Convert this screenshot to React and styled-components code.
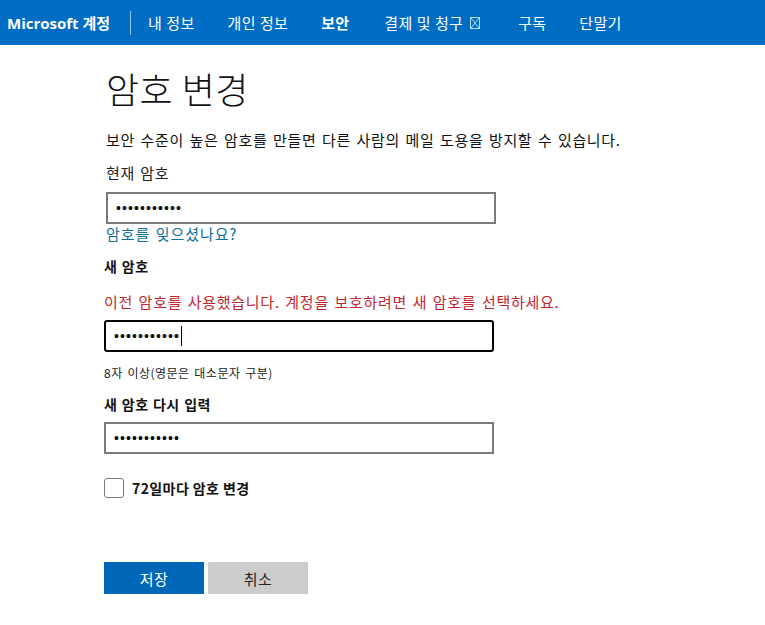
import React from "react";
import styled, { createGlobalStyle } from "styled-components";

const GlobalStyle = createGlobalStyle`
  html, body {
    margin: 0;
    padding: 0;
    background: #fff;
    font-family: "Noto Sans CJK KR", "Open Sans", sans-serif;
  }
`;

const Header = styled.header`
  display: flex;
  align-items: center;
  height: 45px;
  padding-left: 7px;
  background: #006dc4;
  color: #fff;
  overflow: hidden;
`;

const Brand = styled.div`
  font-family: "Open Sans", "Noto Sans CJK KR", sans-serif;
  font-size: 15px;
  font-weight: 700;
  white-space: nowrap;
  padding-right: 20px;
  margin-right: 17px;
  border-right: 1px solid rgba(255, 255, 255, 0.6);
  line-height: 24px;
`;

const Nav = styled.nav`
  display: flex;
  gap: 33px;
`;

const NavItem = styled.a`
  display: flex;
  align-items: center;
  gap: 7px;
  margin-right: ${(p) => (p.$active ? "2px" : "0")};
  font-size: 15px;
  font-weight: ${(p) => (p.$active ? 700 : 400)};
  letter-spacing: 0.3px;
  word-spacing: 0.5px;
  white-space: nowrap;
`;

const Main = styled.main`
  display: flex;
  flex-direction: column;
  align-items: flex-start;
  padding-left: 104px;
  width: 600px;
`;

const Title = styled.h1`
  margin: 18px 0 0 2px;
  font-size: 36px;
  font-weight: 300;
  line-height: 50px;
  color: #111;
  letter-spacing: 0.5px;
`;

const Intro = styled.p`
  margin: 16px 0 0 2px;
  font-size: 15px;
  font-weight: 400;
  letter-spacing: 0.68px;
  word-spacing: 1.5px;
  line-height: 22px;
  color: #111;
  white-space: nowrap;
`;

const PlainLabel = styled.label`
  display: block;
  margin: 11px 0 0 2px;
  font-size: 15px;
  font-weight: 400;
  letter-spacing: 0.6px;
  word-spacing: 1.5px;
  line-height: 22px;
  color: #222;
`;

const BoldLabel = styled.label`
  display: block;
  margin-top: ${(p) => p.$top}px;
  font-size: 14px;
  font-weight: 700;
  letter-spacing: 0.4px;
  word-spacing: 1px;
  line-height: 20px;
  color: #111;
`;

const FieldWrap = styled.div`
  position: relative;
  margin-top: ${(p) => p.$top}px;
  margin-left: ${(p) => p.$left || 0}px;
`;

const PasswordInput = styled.input`
  display: block;
  box-sizing: border-box;
  width: 390px;
  height: 32px;
  padding: 0 8px;
  border: 2px solid ${(p) => (p.$focused ? "#000" : "#7a7a7a")};
  border-radius: ${(p) => (p.$focused ? "3px" : "0")};
  outline: none;
  background: #fff;
  font-family: "Liberation Sans", sans-serif;
  font-size: 14px;
  letter-spacing: 1.1px;
  color: #000;
`;

const Caret = styled.span`
  position: absolute;
  left: 77px;
  top: 6px;
  width: 1px;
  height: 20px;
  background: #000;
`;

const ForgotLink = styled.a`
  display: block;
  margin-left: 2px;
  font-size: 15px;
  font-weight: 400;
  letter-spacing: 0.9px;
  word-spacing: 1.5px;
  line-height: 20px;
  color: #0f6f9f;
`;

const ErrorText = styled.div`
  margin-top: 15px;
  font-size: 15px;
  font-weight: 400;
  letter-spacing: 0.72px;
  word-spacing: 1.5px;
  line-height: 22px;
  color: #c4262e;
  white-space: nowrap;
`;

const Hint = styled.div`
  margin-top: 12px;
  font-size: 12px;
  font-weight: 400;
  letter-spacing: 0.5px;
  word-spacing: 1.5px;
  line-height: 18px;
  color: #222;
`;

const CheckRow = styled.label`
  display: flex;
  align-items: center;
  gap: 8px;
  margin-top: 24px;
  font-size: 14px;
  font-weight: 700;
  letter-spacing: 0.4px;
  line-height: 20px;
  color: #111;
`;

const CheckBox = styled.span`
  box-sizing: border-box;
  width: 20px;
  height: 20px;
  border: 1px solid #7a7a7a;
  border-radius: 3px;
`;

const Buttons = styled.div`
  display: flex;
  gap: 4px;
  margin-top: 64px;
`;

const Button = styled.button`
  width: 100px;
  height: 32px;
  padding: 0;
  border: none;
  background: ${(p) => (p.$primary ? "#0067b8" : "#cccccc")};
  color: ${(p) => (p.$primary ? "#fff" : "#222")};
  font-family: inherit;
  font-size: 15px;
  font-weight: 400;
  letter-spacing: 0.5px;
`;

const MissingGlyph = styled.svg`
  margin-right: 5px;
`;

const BillingIcon = () => (
  <MissingGlyph width="10" height="12" viewBox="0 0 10 12" fill="none" stroke="#b5dcfa" strokeWidth="1">
    <rect x="0.5" y="0.5" width="9" height="11" />
    <path d="M1 1l8 10M9 1L1 11" />
  </MissingGlyph>
);

export default function App() {
  return (
    <>
      <GlobalStyle />
      <Header>
        <Brand>Microsoft 계정</Brand>
        <Nav>
          <NavItem>내 정보</NavItem>
          <NavItem>개인 정보</NavItem>
          <NavItem $active>보안</NavItem>
          <NavItem>
            결제 및 청구 <BillingIcon />
          </NavItem>
          <NavItem>구독</NavItem>
          <NavItem>단말기</NavItem>
        </Nav>
      </Header>
      <Main>
        <Title>암호 변경</Title>
        <Intro>보안 수준이 높은 암호를 만들면 다른 사람의 메일 도용을 방지할 수 있습니다.</Intro>
        <PlainLabel>현재 암호</PlainLabel>
        <FieldWrap $top={8} $left={2}>
          <PasswordInput type="password" defaultValue="abcdefghijk" readOnly />
        </FieldWrap>
        <ForgotLink>암호를 잊으셨나요?</ForgotLink>
        <BoldLabel $top={12}>새 암호</BoldLabel>
        <ErrorText>이전 암호를 사용했습니다. 계정을 보호하려면 새 암호를 선택하세요.</ErrorText>
        <FieldWrap $top={7}>
          <PasswordInput type="password" defaultValue="abcdefghijk" readOnly $focused />
          <Caret />
        </FieldWrap>
        <Hint>8자 이상(영문은 대소문자 구분)</Hint>
        <BoldLabel $top={12}>새 암호 다시 입력</BoldLabel>
        <FieldWrap $top={8}>
          <PasswordInput type="password" defaultValue="abcdefghijk" readOnly />
        </FieldWrap>
        <CheckRow>
          <CheckBox />
          72일마다 암호 변경
        </CheckRow>
        <Buttons>
          <Button $primary>저장</Button>
          <Button>취소</Button>
        </Buttons>
      </Main>
    </>
  );
}
